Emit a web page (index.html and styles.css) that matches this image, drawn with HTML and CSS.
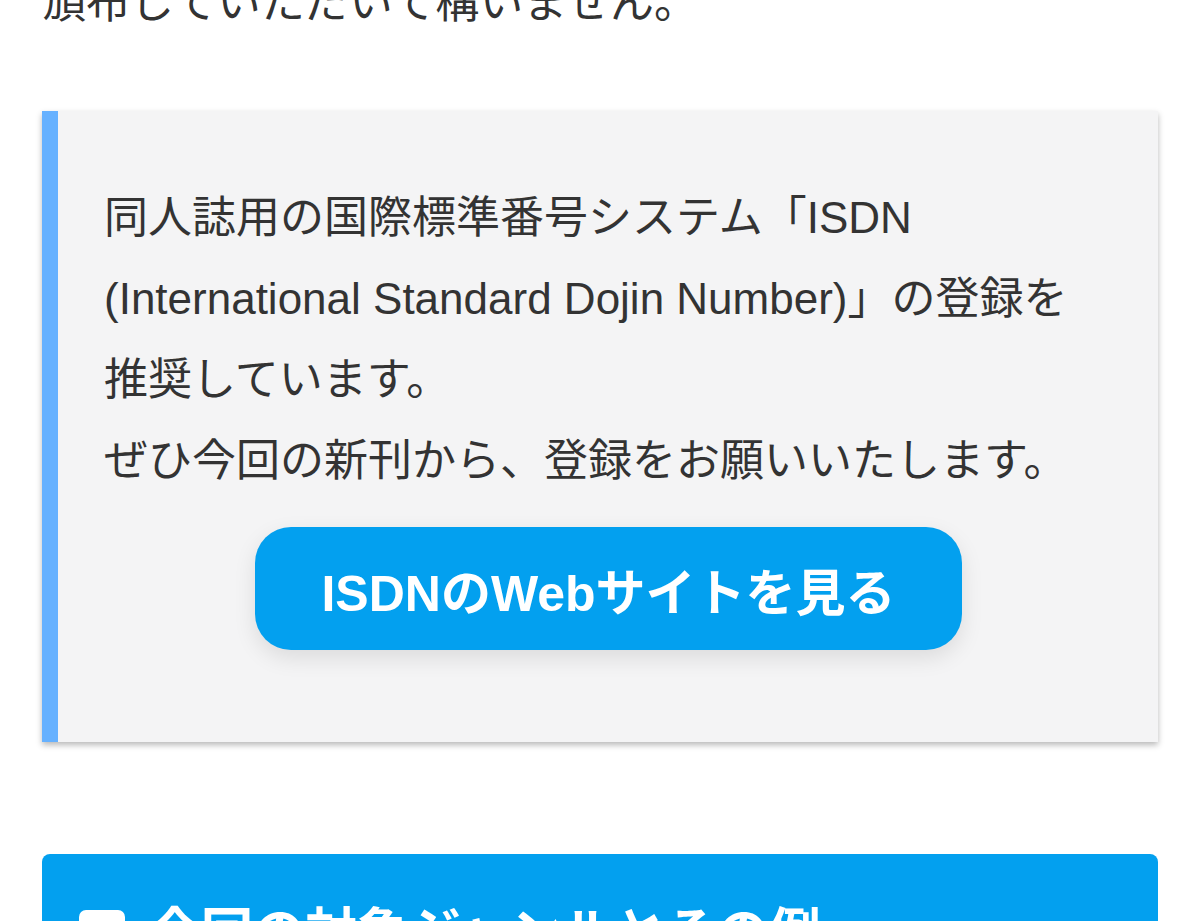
FILE: index.html
```html
<!DOCTYPE html>
<html lang="ja">
<head>
    <meta charset="UTF-8">
    <meta name="viewport" content="width=device-width, initial-scale=1.0">
    <title>ISDN</title>
    <link rel="stylesheet" href="styles.css">
</head>
<body>
    <div class="content">
        <p class="lead">頒布していただいて構いません。</p>

        <div class="notice">
            <p>同人誌用の国際標準番号システム「ISDN (International Standard Dojin Number)」の登録を推奨しています。<br>ぜひ今回の新刊から、登録をお願いいたします。</p>
            <div class="notice-action">
                <a class="btn" href="#">ISDNのWebサイトを見る</a>
            </div>
        </div>

        <div class="section">
            <h2 class="section-title"><span class="section-icon"></span>今回の対象ジャンルとその例</h2>
        </div>
    </div>
</body>
</html>
```

FILE: styles.css
```css
body {
    margin: 0;
    background-color: #fff;
    color: #333;
    font-family: "Liberation Sans", "Noto Sans CJK JP", sans-serif;
    overflow: hidden;
}
.content {
    padding: 0 42px;
}
p {
    margin: 0;
    font-size: 44px;
    line-height: 81px;
}
.lead {
    margin-top: -38px;
}
.notice {
    margin-top: 68px;
    background-color: #f4f4f5;
    border-left: 16px solid #66b1ff;
    box-shadow: 0 3px 6px rgba(0, 0, 0, 0.28);
    padding: 66px 80px 92px 46px;
}
.notice-action {
    display: flex;
    justify-content: center;
    margin-top: 26px;
    margin-right: -34px;
}
.btn {
    display: flex;
    align-items: center;
    justify-content: center;
    width: 707px;
    height: 123px;
    border-radius: 36px;
    background-color: #03a0ef;
    color: #fff;
    font-size: 50px;
    font-weight: bold;
    text-decoration: none;
    box-shadow: 0 8px 22px rgba(0, 0, 0, 0.1);
    margin-left: 1px;
}
.section {
    margin-top: 112px;
    background-color: #03a0ef;
    border-radius: 8px;
    height: 200px;
    padding: 39px 37px;
}
.section-title {
    display: flex;
    align-items: center;
    gap: 24px;
    margin: 0;
    color: #fff;
    font-size: 52px;
    line-height: 80px;
}
.section-icon {
    width: 46px;
    height: 46px;
    background-color: #fff;
    border-radius: 7px;
    flex-shrink: 0;
}
```
